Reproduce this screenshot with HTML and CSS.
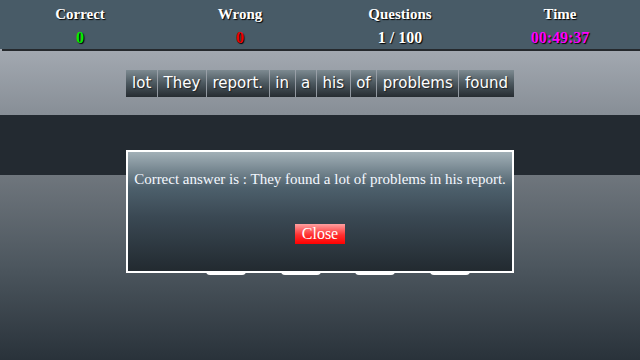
FILE: index.html
```html
<!DOCTYPE html>
<html lang="en">
<head>
    <meta charset="UTF-8">
    <meta name="viewport" content="width=device-width, initial-scale=1.0">
    <title>Sentence Builder</title>
    <link rel="stylesheet" href="styles.css">
</head>
<body>
    <!-- Статистика -->
    <div class="stats">
        <div class="stat">
            <div class="label">Correct</div>
            <div class="value correct">0</div>
        </div>
        <div class="stat">
            <div class="label">Wrong</div>
            <div class="value wrong">0</div>
        </div>
        <div class="stat">
            <div class="label">Questions</div>
            <div class="value">1 / 100</div>
        </div>
        <div class="stat">
            <div class="label">Time</div>
            <div class="value time">00:49:37</div>
        </div>
    </div>

    <!-- Слова -->
    <div class="words">
        <span class="word">lot</span>
        <span class="word">They</span>
        <span class="word">report.</span>
        <span class="word">in</span>
        <span class="word">a</span>
        <span class="word">his</span>
        <span class="word">of</span>
        <span class="word">problems</span>
        <span class="word">found</span>
    </div>

    <div class="answer"></div>

    <div class="choices">
        <span class="choice"></span>
        <span class="choice"></span>
        <span class="choice"></span>
        <span class="choice"></span>
    </div>

    <!-- Окно с ответом -->
    <div class="dialog" id="dialog">
        <p class="message">Correct answer is : They found a lot of problems in his report.</p>
        <button class="close-btn">Close</button>
    </div>
</body>
</html>
```

FILE: styles.css
```css
body {
    margin: 0;
    width: 640px;
    height: 360px;
    overflow: hidden;
    font-family: "Liberation Serif", "Times New Roman", serif;
    background-color: #29323a;
}

.stats {
    position: relative;
    z-index: 1;
    display: flex;
    height: 49px;
    box-sizing: border-box;
    padding-top: 5px;
    background-color: #485b67;
    box-shadow: 2px 2px 0 #25292d;
    color: white;
    font-weight: bold;
    text-shadow: 1px 1px 1px #000;
}

.stat {
    flex: 1;
    text-align: center;
}

.stat .label {
    font-size: 15px;
    line-height: 18px;
}

.stat .value {
    font-size: 16px;
    line-height: 20px;
    margin-top: 5px;
}

.value.correct {
    color: #00ee00;
}

.value.wrong {
    color: #ee0000;
}

.value.time {
    color: #ff00ff;
}

.words {
    display: flex;
    justify-content: center;
    gap: 1px;
    height: 66px;
    box-sizing: border-box;
    padding-top: 21px;
    background: linear-gradient(#a3a9b1, #878e96);
}

.word {
    height: 27px;
    line-height: 27px;
    padding: 0 5.6px;
    font-family: "DejaVu Sans", Verdana, sans-serif;
    font-size: 15px;
    color: white;
    text-shadow: 1px 1px 1px #1d2226;
    background: linear-gradient(#7d8a91, #4b575e 50%, #262c31);
}

.answer {
    height: 60px;
    background-color: #232a31;
}

.choices {
    display: flex;
    gap: 34.5px;
    height: 185px;
    box-sizing: border-box;
    padding: 89.5px 0 0 206px;
    background: linear-gradient(#6f767d, #4c565e 50%, #29323a);
}

.choice {
    width: 40px;
    height: 10px;
    border-radius: 4px;
    background-color: white;
}

/* Окно поверх всего */
.dialog {
    position: absolute;
    top: 150px;
    left: 126px;
    width: 388px;
    height: 123px;
    box-sizing: border-box;
    border: 2px solid white;
    padding-top: 17px;
    text-align: center;
    background: linear-gradient(#a2b0b7, #4d606c 30%, #3a4853 55%, #222a30);
}

.dialog .message {
    margin: 0;
    white-space: nowrap;
    font-size: 15px;
    line-height: 20px;
    color: #f4f8ff;
}

.close-btn {
    margin-top: 35px;
    width: 50px;
    height: 20px;
    padding: 0;
    border: none;
    font-family: "Liberation Serif", "Times New Roman", serif;
    font-size: 16px;
    line-height: 20px;
    color: white;
    background: linear-gradient(#ffa0a0, #ff3030 55%, #ff0000);
    cursor: pointer;
}
```
